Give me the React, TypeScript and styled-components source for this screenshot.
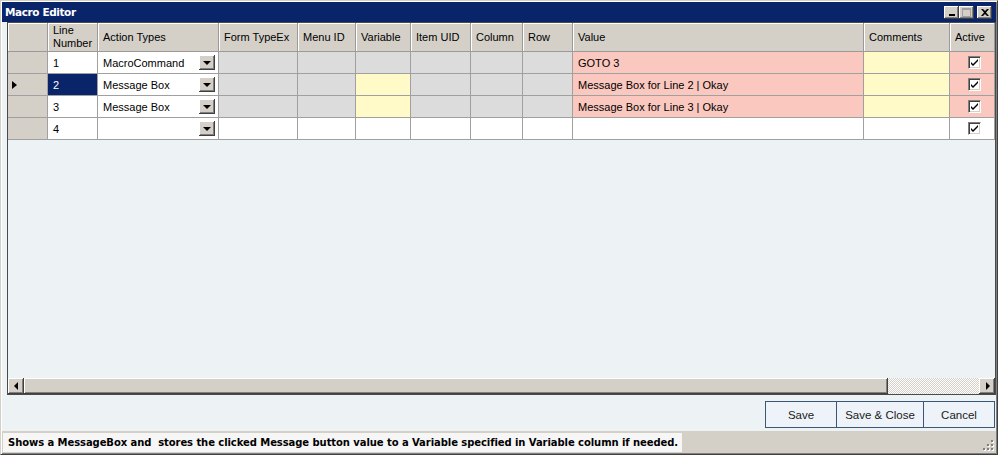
import React from "react";
import styled, { createGlobalStyle, css } from "styled-components";

const Global = createGlobalStyle`
  html, body { margin: 0; padding: 0; background: #d4d0c8; }
  body { font-family: "Liberation Sans", Arial, sans-serif; font-size: 11px; color: #000; }
  * { box-sizing: border-box; }
`;

const raised = css`
  background: #d4d0c8;
  box-shadow: inset -1px -1px #404040, inset 1px 1px #ffffff, inset -2px -2px #808080, inset 2px 2px #d4d0c8;
`;

const Window = styled.div`
  width: 998px;
  height: 455px;
  display: flex;
  flex-direction: column;
  background: #d4d0c8;
  border: 1px solid;
  border-color: #d4d0c8 #404040 #404040 #d4d0c8;
  padding: 1px;
  box-shadow: inset 1px 1px #ffffff, inset -1px -1px #808080;
`;

const TitleBar = styled.div`
  height: 20px;
  flex: none;
  display: flex;
  align-items: center;
  padding: 0 4px 0 3px;
  background: #0a246a;
`;

const Title = styled.div`
  flex: 1;
  color: #fff;
  font-family: "DejaVu Sans", Verdana, sans-serif;
  font-weight: bold;
  font-size: 10.5px;
  letter-spacing: -0.4px;
`;

const CaptionButtons = styled.div`
  display: flex;
  align-items: center;
`;

const CaptionButton = styled.div<{ $gap?: boolean }>`
  ${raised};
  width: 15px;
  height: 13px;
  margin-left: ${(p) => (p.$gap ? 3 : 0)}px;
  display: flex;
  align-items: center;
  justify-content: center;
`;

const Body = styled.div`
  flex: 1;
  display: flex;
  flex-direction: column;
  background: #edf2f5;
  min-height: 0;
`;

const GridFrame = styled.div`
  height: 373px;
  margin-left: 5px;
  border: 1px solid #4a4a4a;
  display: flex;
  flex-direction: column;
  background: #edf2f5;
`;

const COLS = [40, 50, 121, 79, 58, 55, 60, 52, 50, 291, 86, 45];

const Table = styled.div`
  display: grid;
  grid-template-columns: ${COLS.map((c) => `${c}px`).join(" ")};
  grid-auto-rows: 22px;
  grid-template-rows: 29px;
`;

const HeaderCell = styled.div`
  background: #d4d0c8;
  border-right: 1px solid #9a9a9a;
  border-bottom: 1px solid #9a9a9a;
  box-shadow: inset 1px 1px #ffffff;
  display: flex;
  align-items: center;
  padding-left: 5px;
  line-height: 13px;
  white-space: pre;
  color: #000;
`;

type Tone = "white" | "gray" | "yellow" | "pink" | "selected" | "rowhead";

const toneBg: Record<Tone, string> = {
  white: "#ffffff",
  gray: "#dcdcdc",
  yellow: "#fffac8",
  pink: "#fbc8bf",
  selected: "#0a246a",
  rowhead: "#d4d0c8",
};

const Cell = styled.div<{ $tone: Tone; $center?: boolean }>`
  background: ${(p) => toneBg[p.$tone]};
  color: ${(p) => (p.$tone === "selected" ? "#fff" : "#000")};
  border-right: 1px solid #a0a0a0;
  border-bottom: 1px solid #a0a0a0;
  display: flex;
  align-items: center;
  justify-content: ${(p) => (p.$center ? "center" : "flex-start")};
  padding: 0 2px 0 5px;
  white-space: nowrap;
  overflow: hidden;
`;

const RowHeadCell = styled(Cell)`
  padding-left: 4px;
`;

const CurrentMarker = styled.div`
  width: 0;
  height: 0;
  border-left: 5px solid #000;
  border-top: 4px solid transparent;
  border-bottom: 4px solid transparent;
`;

const ComboText = styled.span`
  flex: 1;
`;

const DropButton = styled.div`
  ${raised};
  width: 16px;
  height: 15px;
  flex: none;
  margin-right: 1px;
  display: flex;
  align-items: center;
  justify-content: center;
`;

const DownArrow = styled.div`
  width: 0;
  height: 0;
  border-top: 4px solid #000;
  border-left: 4px solid transparent;
  border-right: 4px solid transparent;
  margin-top: 1px;
`;

const Check = styled.div`
  width: 13px;
  height: 13px;
  background: #fff;
  border: 1px solid;
  border-color: #808080 #ffffff #ffffff #808080;
  box-shadow: inset 1px 1px #404040, inset -1px -1px #d4d0c8;
  display: flex;
  align-items: center;
  justify-content: center;
  margin-left: 1px;
`;

const Filler = styled.div`
  flex: 1;
`;

const HScroll = styled.div`
  height: 16px;
  flex: none;
  display: flex;
`;

const ScrollArrow = styled.div`
  ${raised};
  width: 16px;
  height: 16px;
  display: flex;
  align-items: center;
  justify-content: center;
`;

const Thumb = styled.div`
  ${raised};
  width: 864px;
  height: 16px;
`;

const Track = styled.div`
  flex: 1;
  background: repeating-conic-gradient(#d4d0c8 0 25%, #ffffff 0 50%) 0 0 / 2px 2px;
`;

const Tri = styled.div<{ $dir: "left" | "right" }>`
  width: 0;
  height: 0;
  border-top: 4px solid transparent;
  border-bottom: 4px solid transparent;
  ${(p) =>
    p.$dir === "left"
      ? "border-right: 4px solid #000; margin-right: 1px;"
      : "border-left: 4px solid #000; margin-left: 1px;"}
`;

const ButtonRow = styled.div`
  height: 36px;
  flex: none;
  display: flex;
  justify-content: flex-end;
  align-items: flex-start;
  padding: 6px 1px 0 0;
`;

const ActionButton = styled.button<{ $w: number }>`
  width: ${(p) => p.$w}px;
  height: 27px;
  margin: 0 0 0 -1px;
  padding: 0;
  background: #edf3f8;
  border: 1px solid #3b5775;
  font-family: "Liberation Sans", Arial, sans-serif;
  font-size: 11.5px;
  color: #1a1a1a;
`;

const StatusBar = styled.div`
  height: 22px;
  flex: none;
  display: flex;
  align-items: center;
  background: #d4d0c8;
  padding: 1px 2px 1px 1px;
`;

const StatusText = styled.div`
  height: 19px;
  display: flex;
  align-items: center;
  padding: 0 4px 0 5px;
  background: #f6f6f6;
  font-family: "DejaVu Sans", Verdana, sans-serif;
  font-weight: bold;
  font-size: 10px;
  letter-spacing: -0.07px;
  white-space: nowrap;
`;

const Grip = styled.div`
  margin-left: auto;
  width: 12px;
  height: 12px;
  align-self: flex-end;
  margin-bottom: 1px;
`;

const headers = [
  "",
  "Line\nNumber",
  "Action Types",
  "Form TypeEx",
  "Menu ID",
  "Variable",
  "Item UID",
  "Column",
  "Row",
  "Value",
  "Comments",
  "Active",
];

type Row = {
  line: string;
  action: string;
  value: string;
  current?: boolean;
  tones: Tone[]; // Form TypeEx .. Active
};

const G: Tone = "gray";
const rows: Row[] = [
  { line: "1", action: "MacroCommand", value: "GOTO 3", tones: [G, G, G, G, G, G, "pink", "yellow", "pink"] },
  {
    line: "2",
    action: "Message Box",
    value: "Message Box for Line 2 | Okay",
    current: true,
    tones: [G, G, "yellow", G, G, G, "pink", "yellow", "pink"],
  },
  {
    line: "3",
    action: "Message Box",
    value: "Message Box for Line 3 | Okay",
    tones: [G, G, "yellow", G, G, G, "pink", "yellow", "pink"],
  },
  { line: "4", action: "", value: "", tones: Array(9).fill("white") as Tone[] },
];

const CheckMark = () => (
  <svg width="9" height="9" viewBox="0 0 9 9">
    <path d="M1 4 L3 6 L8 1 L8 3 L3 8 L1 6 Z" fill="#000" />
  </svg>
);

const GripDots = () => (
  <svg width="12" height="12" viewBox="0 0 12 12">
    {[
      [9, 1],
      [5, 5],
      [9, 5],
      [1, 9],
      [5, 9],
      [9, 9],
    ].map(([x, y]) => (
      <g key={`${x}-${y}`}>
        <rect x={x + 1} y={y + 1} width="2" height="2" fill="#ffffff" />
        <rect x={x} y={y} width="2" height="2" fill="#808080" />
      </g>
    ))}
  </svg>
);

export default function App() {
  return (
    <>
      <Global />
      <Window>
        <TitleBar>
          <Title>Macro Editor</Title>
          <CaptionButtons>
            <CaptionButton>
              <svg width="8" height="9" viewBox="0 0 8 9">
                <rect x="1" y="6" width="6" height="2" fill="#000" />
              </svg>
            </CaptionButton>
            <CaptionButton>
              <svg width="9" height="9" viewBox="0 0 9 9">
                <rect x="0.5" y="0.5" width="8" height="8" fill="none" stroke="#a0a0a0" />
                <rect x="0" y="0" width="9" height="2" fill="#a0a0a0" />
              </svg>
            </CaptionButton>
            <CaptionButton $gap>
              <svg width="8" height="7" viewBox="0 0 8 7">
                <path d="M0 0 L2 0 L4 2 L6 0 L8 0 L5 3.5 L8 7 L6 7 L4 5 L2 7 L0 7 L3 3.5 Z" fill="#000" />
              </svg>
            </CaptionButton>
          </CaptionButtons>
        </TitleBar>
        <Body>
          <GridFrame>
            <Table>
              {headers.map((h, i) => (
                <HeaderCell key={i}>{h}</HeaderCell>
              ))}
              {rows.map((r) => (
                <React.Fragment key={r.line}>
                  <RowHeadCell $tone="rowhead">{r.current && <CurrentMarker />}</RowHeadCell>
                  <Cell $tone={r.current ? "selected" : "white"}>{r.line}</Cell>
                  <Cell $tone="white">
                    <ComboText>{r.action}</ComboText>
                    <DropButton>
                      <DownArrow />
                    </DropButton>
                  </Cell>
                  {r.tones.map((t, i) =>
                    i === 8 ? (
                      <Cell key={i} $tone={t} $center>
                        <Check>
                          <CheckMark />
                        </Check>
                      </Cell>
                    ) : (
                      <Cell key={i} $tone={t}>
                        {i === 6 ? r.value : ""}
                      </Cell>
                    )
                  )}
                </React.Fragment>
              ))}
            </Table>
            <Filler />
            <HScroll>
              <ScrollArrow>
                <Tri $dir="left" />
              </ScrollArrow>
              <Thumb />
              <Track />
              <ScrollArrow>
                <Tri $dir="right" />
              </ScrollArrow>
            </HScroll>
          </GridFrame>
          <ButtonRow>
            <ActionButton $w={72}>Save</ActionButton>
            <ActionButton $w={88}>Save &amp; Close</ActionButton>
            <ActionButton $w={72}>Cancel</ActionButton>
          </ButtonRow>
        </Body>
        <StatusBar>
          <StatusText>
            Shows a MessageBox and&nbsp; stores the clicked Message button value to a Variable specified in Variable column if needed.
          </StatusText>
          <Grip>
            <GripDots />
          </Grip>
        </StatusBar>
      </Window>
    </>
  );
}
